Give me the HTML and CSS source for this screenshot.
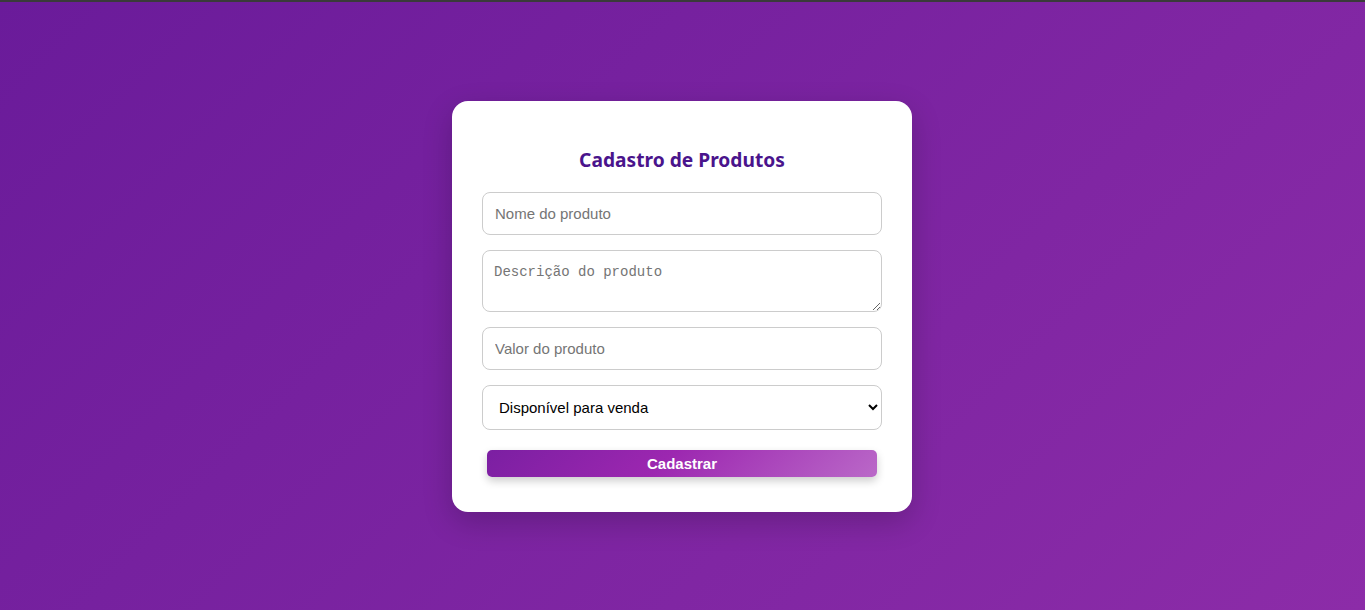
FILE: index.html
```html
<!DOCTYPE html>
<html lang="pt-BR">
<head>
<meta charset="UTF-8">
<title>Cadastro de Produtos</title>
<link rel="stylesheet" href="styles.css">
</head>
<body>
<div class="card">
  <h2 class="title">Cadastro de Produtos</h2>
  <form class="form">
    <input class="field" type="text" placeholder="Nome do produto">
    <textarea class="field area" placeholder="Descrição do produto"></textarea>
    <input class="field" type="text" placeholder="Valor do produto">
    <select class="field select">
      <option>Disponível para venda</option>
      <option>Indisponível</option>
    </select>
    <button class="btn" type="button">Cadastrar</button>
  </form>
</div>
</body>
</html>
```
FILE: styles.css
```css
* { box-sizing: border-box; }
html, body { margin: 0; padding: 0; }
body {
  min-height: 100vh;
  border-top: 2px solid #3a3a3a;
  padding-right: 1px;
  background: linear-gradient(135deg, #6a1b9a, #8c2ca8);
  display: flex;
  align-items: center;
  justify-content: center;
  font-family: "Liberation Sans", Arial, sans-serif;
}
.card {
  width: 460px;
  background: #fff;
  border-radius: 16px;
  padding: 30px;
  box-shadow: 0 10px 30px rgba(0, 0, 0, 0.2);
}
.title {
  margin: 15px 0 18px;
  text-align: center;
  font-family: "Noto Sans", sans-serif;
  font-size: 19.2px;
  line-height: 28px;
  font-weight: 700;
  color: #4a148c;
}
.form {
  display: flex;
  flex-direction: column;
  gap: 15px;
}
.field {
  width: 100%;
  height: 43px;
  padding: 12px;
  border: 1px solid #ccc;
  border-radius: 8px;
  font-family: "Liberation Sans", Arial, sans-serif;
  font-size: 15px;
  color: #000;
  background: #fff;
  outline: none;
}
.field::placeholder { color: #757575; }
.area {
  height: 62px;
  font-family: "Liberation Mono", monospace;
  font-size: 14px;
  padding: 13px 12px 12px 11px;
  resize: vertical;
}
.select {
  height: 45px;
  padding: 12px;
}
.btn {
  margin: 5px 5px 5px;
  height: 27px;
  border: none;
  border-radius: 5px;
  background: linear-gradient(135deg, #7b1fa2, #9c27b0 45%, #ba68c8);
  color: #fff;
  font-family: "Liberation Sans", Arial, sans-serif;
  font-weight: 700;
  font-size: 15px;
  box-shadow: 0 4px 8px rgba(0, 0, 0, 0.2);
  cursor: pointer;
}
```
